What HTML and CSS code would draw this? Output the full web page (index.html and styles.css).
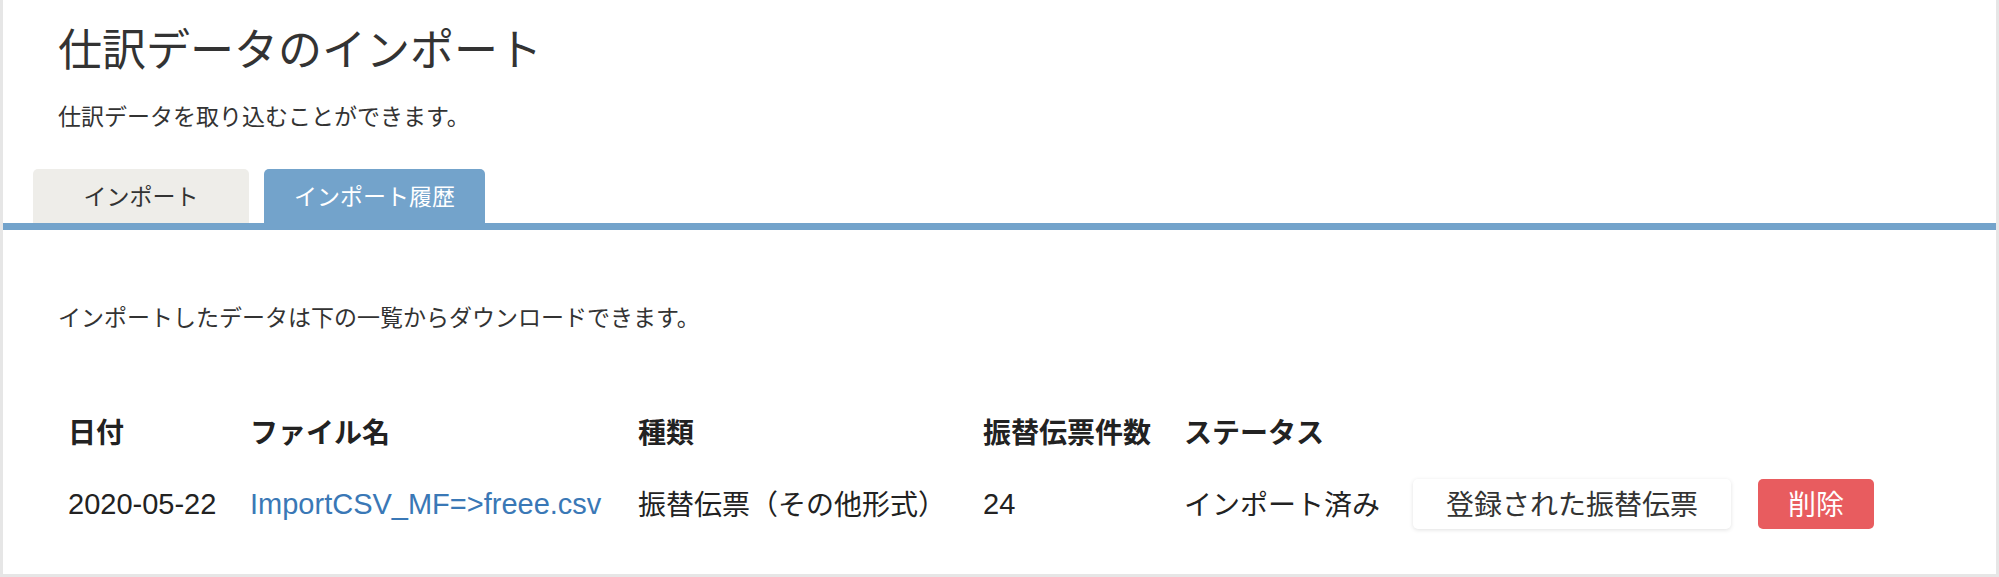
FILE: index.html
```html
<!DOCTYPE html>
<html lang="ja">
<head>
<meta charset="utf-8">
<title>仕訳データのインポート</title>
<link rel="stylesheet" href="styles.css">
</head>
<body>
<div class="page">
  <header class="page-head">
    <h1 class="title">仕訳データのインポート</h1>
    <p class="subtitle">仕訳データを取り込むことができます。</p>
  </header>
  <nav class="tabs">
    <a class="tab tab-import">インポート</a>
    <a class="tab tab-history is-active">インポート履歴</a>
  </nav>
  <section class="content">
    <p class="lead">インポートしたデータは下の一覧からダウンロードできます。</p>
    <div class="history">
      <div class="row row-head">
        <div class="cell">日付</div>
        <div class="cell">ファイル名</div>
        <div class="cell">種類</div>
        <div class="cell">振替伝票件数</div>
        <div class="cell">ステータス</div>
        <div class="cell"></div>
      </div>
      <div class="row row-body">
        <div class="cell latin">2020-05-22</div>
        <div class="cell latin"><a class="file-link">ImportCSV_MF=&gt;freee.csv</a></div>
        <div class="cell">振替伝票（その他形式）</div>
        <div class="cell latin">24</div>
        <div class="cell">インポート済み</div>
        <div class="cell actions">
          <button class="btn btn-default">登録された振替伝票</button>
          <button class="btn btn-danger">削除</button>
        </div>
      </div>
    </div>
  </section>
</div>
</body>
</html>
```

FILE: styles.css
```css
html, body {
  margin: 0;
  padding: 0;
  background: #ffffff;
}

body {
  font-family: "Noto Sans", "Noto Sans CJK JP", sans-serif;
  color: #333333;
}

.page {
  width: 1993px;
  height: 574px;
  border-left: 3px solid #e6e6e6;
  border-right: 3px solid #e6e6e6;
  border-bottom: 3px solid #e6e6e6;
  background: #ffffff;
  overflow: hidden;
}

.page-head {
  padding: 21px 0 0 55px;
}

.title {
  margin: 0;
  font-size: 44px;
  font-weight: 400;
  line-height: 56px;
  color: #333333;
}

.subtitle {
  margin: 23px 0 0;
  font-size: 23px;
  line-height: 32px;
  color: #333333;
}

.tabs {
  display: flex;
  gap: 15px;
  margin-top: 37px;
  padding-left: 30px;
  border-bottom: 7px solid #73a3cb;
}

.tab {
  display: block;
  height: 54px;
  line-height: 54px;
  text-align: center;
  font-size: 23px;
  border-radius: 5px 5px 0 0;
  cursor: pointer;
}

.tab-import {
  width: 216px;
  background: #eeede9;
  color: #333333;
}

.tab-history {
  width: 221px;
  background: #73a3cb;
  color: #ffffff;
}

.content {
  padding: 71px 0 0 55px;
}

.lead {
  margin: 0;
  font-size: 23px;
  line-height: 32px;
}

.history {
  margin-top: 79px;
  padding-left: 10px;
  font-size: 28px;
}

.row {
  display: grid;
  grid-template-columns: 182px 388px 345px 201px 229px auto;
  align-items: center;
}

.row-head {
  height: 40px;
  font-weight: 700;
  color: #222222;
}

.row-body {
  margin-top: 27px;
  height: 50px;
  color: #222222;
}

.cell {
  white-space: nowrap;
  line-height: 40px;
}

.latin {
  font-family: "Liberation Sans", Arial, sans-serif;
  font-size: 29px;
}

.file-link {
  color: #3a78b6;
  text-decoration: none;
  cursor: pointer;
}

.actions {
  display: flex;
  gap: 27px;
}

.btn {
  height: 50px;
  padding: 0 30px;
  border: none;
  border-radius: 5px;
  font-family: "Noto Sans", "Noto Sans CJK JP", sans-serif;
  font-size: 28px;
  line-height: 50px;
  cursor: pointer;
}

.btn-default {
  width: 318px;
  background: #ffffff;
  color: #333333;
  box-shadow: 0 1px 4px rgba(0, 0, 0, 0.12);
}

.btn-danger {
  width: 116px;
  background: #e85c5f;
  color: #ffffff;
}
```
